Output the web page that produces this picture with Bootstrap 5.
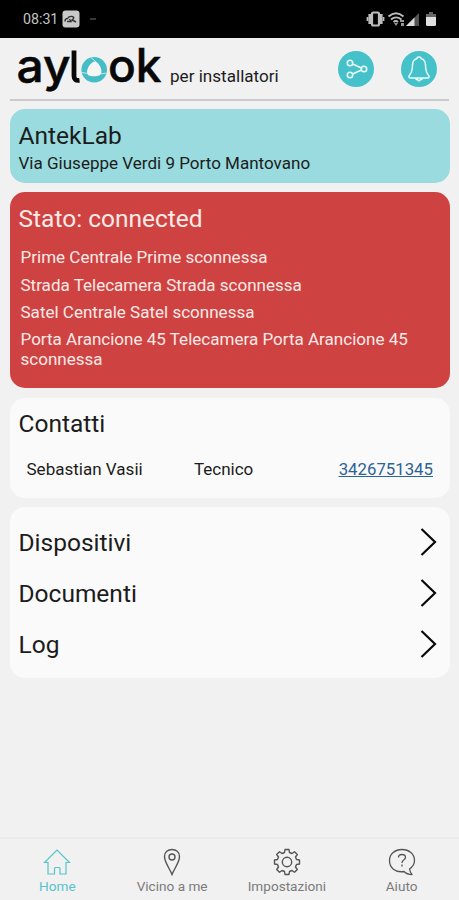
<!DOCTYPE html>
<html lang="it">
<head>
<meta charset="utf-8">
<meta name="viewport" content="width=device-width, initial-scale=1">
<title>aylook per installatori</title>
<link href="https://cdn.jsdelivr.net/npm/bootstrap@5.3.0/dist/css/bootstrap.min.css" rel="stylesheet">
<style>
body{font-family:Roboto,sans-serif;background:#f1f1f1;color:#1c1c1c;height:900px;overflow:hidden}
svg{display:block;flex:none}
.status{height:38px;background:#000;color:#c4c4c4;font-size:14.2px;padding:0 21px 0 23px}
.clock{width:35px;white-space:nowrap;padding-top:2px}
.brandbar{height:63px;margin:0 10px;border-bottom:2px solid #cacac8}
.sub{font-size:17.1px;line-height:20px;margin-top:28px;white-space:nowrap}
.acts{gap:27px;margin-right:12px}
.round{width:36px;height:36px;background:#45c1ca;margin-top:13px}
.panel{border:0;border-radius:15px;background:#fafafa;color:#1c1c1c}
.title{font-size:24.5px;line-height:30px;font-weight:400;margin:0}
.txt{font-size:17.05px;line-height:20px}
.site{background:#99dbdf;height:74px;padding:12px 9px}
.addr{margin-top:2px}
.alarm{background:#cf4242;color:#fbeae6;height:196px;padding:12px 9px}
.alarm ul{margin:14px 0 0;padding:0 2px}
.alarm li{margin-bottom:7.6px;line-height:19.7px}
.people{height:100px;padding:11px 9px}
.people .row{margin-top:20px;padding:0 8px}
.links{height:171px;padding:11px 13.5px 0 9px}
.links a{height:51px;color:#1c1c1c}
.links svg{margin-bottom:2px}
.phone{color:#2d6395;font-size:16.8px}
.role{margin-left:-2px;margin-right:2px}
.stack{padding:8px 9px 0 9.5px;gap:9.3px}
.tabs{height:63px;border-top:2px solid #eaeaea;background:#f1f1f1;font-size:13.6px;line-height:16px;color:#7b7b7b}
.tabs a{color:inherit;padding-top:9px;gap:2px}
.tabs a.on{color:#55c4cb}
</style>
<script src="https://cdn.jsdelivr.net/npm/bootstrap@5.3.0/dist/js/bootstrap.bundle.min.js"></script>
</head>
<body class="d-flex flex-column">
<div class="status d-flex align-items-center">
  <span class="clock">08:31</span>
  <svg class="ms-1" width="18" height="18" viewBox="0 0 18 18"><rect x=".5" y=".5" width="17" height="17" rx="3" fill="#c9c9c9"/><path d="M3 11.500Q3 8.500 5.500 8.500Q7 6 10 6.500Q12.500 7 11.500 8.500L10 10L14 12M5 11.500H9L7.500 9" fill="none" stroke="#333" stroke-width="1.400"/></svg>
  <svg class="ms-2" width="12" height="18"><path d="M2 9h6" stroke="#555" stroke-width="1.300"/></svg>
  <svg class="ms-auto" width="72" height="18" viewBox="0 0 72 18">
    <g stroke="#bdbdbd" fill="none"><rect x="6" y="2.500" width="7" height="13" rx="1.500" stroke-width="2.200"/><path d="M3.700 4v10M15.300 4v10" stroke-width="2.600"/><path d="M1.500 7v4M17.500 7v4" stroke-width="1.800"/>
    <path d="M22.500 6.500Q30 0 37.500 6.500M25 9.500Q30 5.200 35.500 9.500M27.500 12Q30 10 32 12" stroke-width="1.800"/></g>
    <path d="M30 16l-2-3h4zM34 10h4v2h-4zM35 13h3v3h-3z" fill="#999"/>
    <path d="M53 3v13H40z" fill="#555"/><path d="M48.500 7.500V16H40z" fill="#ddd"/>
    <path d="M60 4h3V2h4v2h3v4H60z" fill="#666"/><path d="M60 7h10v7.500q0 1.500-1.500 1.500h-7q-1.500 0-1.500-1.500z" fill="#e0e0e0"/>
  </svg>
</div>
<header class="brandbar d-flex align-items-start">
  <svg width="160" height="58" viewBox="10 38 160 58" role="img" aria-label="aylook">
    <g font-family="Inter,sans-serif" font-weight="500" font-size="46" fill="#080808" stroke="#080808" stroke-width=".5">
      <text x="16.500" y="82.300" textLength="54" lengthAdjust="spacingAndGlyphs">ay</text>
      <text x="108" y="82.300" textLength="53.500" lengthAdjust="spacingAndGlyphs">ok</text>
    </g>
    <path d="M74 50.500V76Q74 81 79.500 80.300" fill="none" stroke="#080808" stroke-width="4.800"/>
    <circle cx="94.200" cy="69.800" r="12.800" fill="#45bdc6"/>
    <path d="M95 61.500C98.500 62 101.500 68 101.500 71.500C101.500 75.500 98 76.300 94 76.300C90 76.300 86.500 75.500 87 71.500C87.500 67 91.500 61.500 95 61.500Z" fill="#f5f5f5"/>
    <path d="M91 57.500L96 62M106.500 73L101 74M82 72.500L88 73.500" stroke="#c4e8ea" stroke-width="1"/>
  </svg>
  <span class="sub">per installatori</span>
  <div class="d-flex ms-auto acts">
    <a href="#" class="round rounded-circle d-flex"><svg width="36" height="36" viewBox="0 0 36 36" fill="none" stroke="#e8fafa" stroke-width="1.600"><circle cx="12" cy="12" r="2.700"/><circle cx="12" cy="24" r="2.700"/><circle cx="26" cy="18" r="2.700"/><path d="M14.500 13L23.500 17M14.500 23L23.500 19"/></svg></a>
    <a href="#" class="round rounded-circle d-flex"><svg width="36" height="36" viewBox="0 0 36 36" fill="none" stroke="#e8fafa" stroke-width="1.500" stroke-linejoin="round"><path d="M16 7.500Q16 6 18 6T20 7.500Q24.500 9 24.500 14C24.500 21 26 22.500 28 25Q28.500 27 26.500 27H9.500Q7.500 27 8 25C10 22.500 11.500 21 11.500 14Q11.500 9 16 7.500ZM14.500 27Q15 29 16.500 28.500Q18 31 19.500 28.500Q21 29 21.500 27"/></svg></a>
  </div>
</header>
<main class="stack d-flex flex-column flex-grow-1">
  <section class="card panel site"><h1 class="title">AntekLab</h1><div class="txt addr">Via Giuseppe Verdi 9 Porto Mantovano</div></section>
  <section class="card panel alarm"><h2 class="title">Stato: connected</h2>
    <ul class="list-unstyled txt"><li>Prime Centrale Prime sconnessa</li><li>Strada Telecamera Strada sconnessa</li><li>Satel Centrale Satel sconnessa</li><li>Porta Arancione 45 Telecamera Porta Arancione 45 sconnessa</li></ul></section>
  <section class="card panel people"><h2 class="title">Contatti</h2>
    <div class="row g-0 txt"><div class="col-5">Sebastian Vasii</div><div class="col-3"><div class="role">Tecnico</div></div><div class="col-4 text-end"><a class="phone" href="tel:3426751345">3426751345</a></div></div></section>
  <nav class="card panel links">
    <a href="#" class="d-flex align-items-center justify-content-between text-decoration-none"><span class="title">Dispositivi</span><svg width="17" height="28" viewBox="0 0 17 28"><path d="M1.500 1L15 14L1.500 27" fill="none" stroke="#080808" stroke-width="2.200"/></svg></a>
    <a href="#" class="d-flex align-items-center justify-content-between text-decoration-none"><span class="title">Documenti</span><svg width="17" height="28" viewBox="0 0 17 28"><path d="M1.500 1L15 14L1.500 27" fill="none" stroke="#080808" stroke-width="2.200"/></svg></a>
    <a href="#" class="d-flex align-items-center justify-content-between text-decoration-none"><span class="title">Log</span><svg width="17" height="28" viewBox="0 0 17 28"><path d="M1.500 1L15 14L1.500 27" fill="none" stroke="#080808" stroke-width="2.200"/></svg></a>
  </nav>
</main>
<nav class="tabs row g-0">
  <a href="#" class="on col d-flex flex-column align-items-center text-decoration-none"><svg width="28" height="28" viewBox="0 0 28 28" fill="none" stroke="currentColor" stroke-width="1.200"><path d="M5 14.500H1.500L14 2L26.500 14.500H23V26H17V20.500Q17 19.500 16 19.500H12.500Q11.500 19.500 11.500 20.500V26H5Z"/></svg>Home</a>
  <a href="#" class="col d-flex flex-column align-items-center text-decoration-none"><svg width="28" height="28" viewBox="0 0 28 28" fill="none" stroke="#555" stroke-width="1.400"><path d="M14 26.500C12 21 6.500 14.500 6.500 8.500C6.500 4 10 1.500 14 1.500S21.500 4 21.500 8.500C21.500 14.500 16 21 14 26.500Z"/><circle cx="14" cy="9" r="3"/></svg>Vicino a me</a>
  <a href="#" class="col d-flex flex-column align-items-center text-decoration-none"><svg width="28" height="28" viewBox="0 0 28 28" fill="none" stroke="#555" stroke-width="1.400" stroke-linejoin="round"><path d="M11.500 4.500L12 1.500H16L16.500 4.500L19 5.500L21.500 3.700L24.300 6.500L22.500 9L23.500 11.500L26.500 12V16L23.500 16.500L22.500 19L24.300 21.500L21.500 24.300L19 22.500L16.500 23.500L16 26.500H12L11.500 23.500L9 22.500L6.500 24.300L3.700 21.500L5.500 19L4.500 16.500L1.500 16V12L4.500 11.500L5.500 9L3.700 6.500L6.500 3.700L9 5.500Z"/><circle cx="14" cy="14" r="4.700"/></svg>Impostazioni</a>
  <a href="#" class="col d-flex flex-column align-items-center text-decoration-none"><svg width="28" height="28" viewBox="0 0 28 28" fill="none" stroke="#555" stroke-width="1.300" stroke-linejoin="round"><path d="M16 23.500C7 25 1.500 19.500 1.500 12.500C1.500 6 7 1.500 14 1.500S26.500 6 26.500 12.500Q26.500 17.500 21.500 21Q22 24 24 26.500Q19 26.500 16 23.500Z"/><path d="M10.500 9.500Q10.500 6.500 14 6.500T17.500 9.500C17.500 12 14 11.500 14 15M14 16.500V18.500"/></svg>Aiuto</a>
</nav>
</body>
</html>
